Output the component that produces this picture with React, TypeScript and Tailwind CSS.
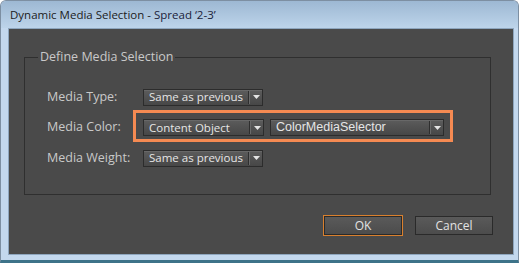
import React from "react";

const ui = { fontFamily: '"Open Sans", "Noto Sans", sans-serif' };
const arial = { fontFamily: '"Liberation Sans", Arial, sans-serif' };

function Arrow() {
  return (
    <svg width="7" height="4" viewBox="0 0 7 4" className="block">
      <path d="M0 0 H7 L3.5 4 Z" fill="#e4e4e4" />
    </svg>
  );
}

function Select({
  value,
  width,
  font = ui,
  size = "text-[11.5px]",
}: {
  value: string;
  width: string;
  font?: React.CSSProperties;
  size?: string;
}) {
  return (
    <div
      className={`${width} h-[17px] flex items-center border border-[#2c2c2c] bg-gradient-to-b from-[#5c5c5c] to-[#474747] shadow-[inset_0_1px_0_#686868]`}
    >
      <span className={`flex-1 pl-[5px] ${size} leading-none text-[#e6e6e6] whitespace-nowrap`} style={font}>
        {value}
      </span>
      <span className="h-[13px] w-px bg-[#2e2e2e]" />
      <span className="h-[13px] w-px bg-[#6a6a6a]" />
      <span className="w-[12px] flex justify-center">
        <Arrow />
      </span>
    </div>
  );
}

function Label({ children }: { children: React.ReactNode }) {
  return (
    <div className="w-[96px] text-[12.5px] leading-none text-[#c9c9c9]" style={ui}>
      {children}
    </div>
  );
}

function Button({ children }: { children: React.ReactNode }) {
  return (
    <div
      className="w-[78px] h-[19px] flex items-center justify-center border border-[#2a2a2a] bg-gradient-to-b from-[#5a5a5a] to-[#4c4c4c] text-[12px] text-[#e2e2e2] leading-none"
      style={ui}
    >
      {children}
    </div>
  );
}

export default function App() {
  return (
    <div className="w-[521px] h-[263px] bg-white overflow-hidden">
      <div className="w-[519px] h-[263px] flex flex-col rounded-t-[6px] border-x border-t border-[#7d8fa2] border-b-[3px] border-b-[#3d7389] bg-[#c3d8ee]">
        {/* title bar */}
        <div className="h-[27px] flex items-center pl-[9px] rounded-t-[5px] bg-gradient-to-b from-[#9db8d3] to-[#bdd4ea]">
          <span className="text-[11.5px] text-[#1c1c1c]" style={ui}>
            Dynamic Media Selection - <span className="text-[#1b1d3a]">Spread ‘2-3’</span>
          </span>
        </div>

        {/* client area */}
        <div className="flex-1 ml-[7px] mr-[4px] mb-[5px] border border-[#8ea6be] bg-[#4a4a4a] flex flex-col">
          <fieldset className="mt-[22px] ml-[15px] w-[467px] h-[144px] border border-[#2f2f2f] p-0">
            <legend className="ml-[13px] px-[2px] text-[12.5px] text-[#c9c9c9] leading-none" style={ui}>
              Define Media Selection
            </legend>
            <div className="flex flex-col gap-[13.5px] pl-[22px] pt-[25px]">
              <div className="flex items-center">
                <Label>Media Type:</Label>
                <Select value="Same as previous" width="w-[120px]" />
              </div>
              <div className="flex items-center">
                <Label>Media Color:</Label>
                <div className="relative flex items-center gap-[6px]">
                  <Select value="Content Object" width="w-[121px]" />
                  <Select value="ColorMediaSelector" width="w-[174px]" font={arial} size="text-[12.5px]" />
                  <span className="absolute -left-[10px] -top-[9px] w-[320px] h-[32px] border-[3px] border-[#f58a52] pointer-events-none" />
                </div>
              </div>
              <div className="flex items-center">
                <Label>Media Weight:</Label>
                <Select value="Same as previous" width="w-[120px]" />
              </div>
            </div>
          </fieldset>

          <div className="mt-auto mb-[18px] mr-[20px] flex justify-end items-center gap-[12px]">
            <div className="border border-[#d9802e]">
              <Button>OK</Button>
            </div>
            <Button>Cancel</Button>
          </div>
        </div>
      </div>
    </div>
  );
}
